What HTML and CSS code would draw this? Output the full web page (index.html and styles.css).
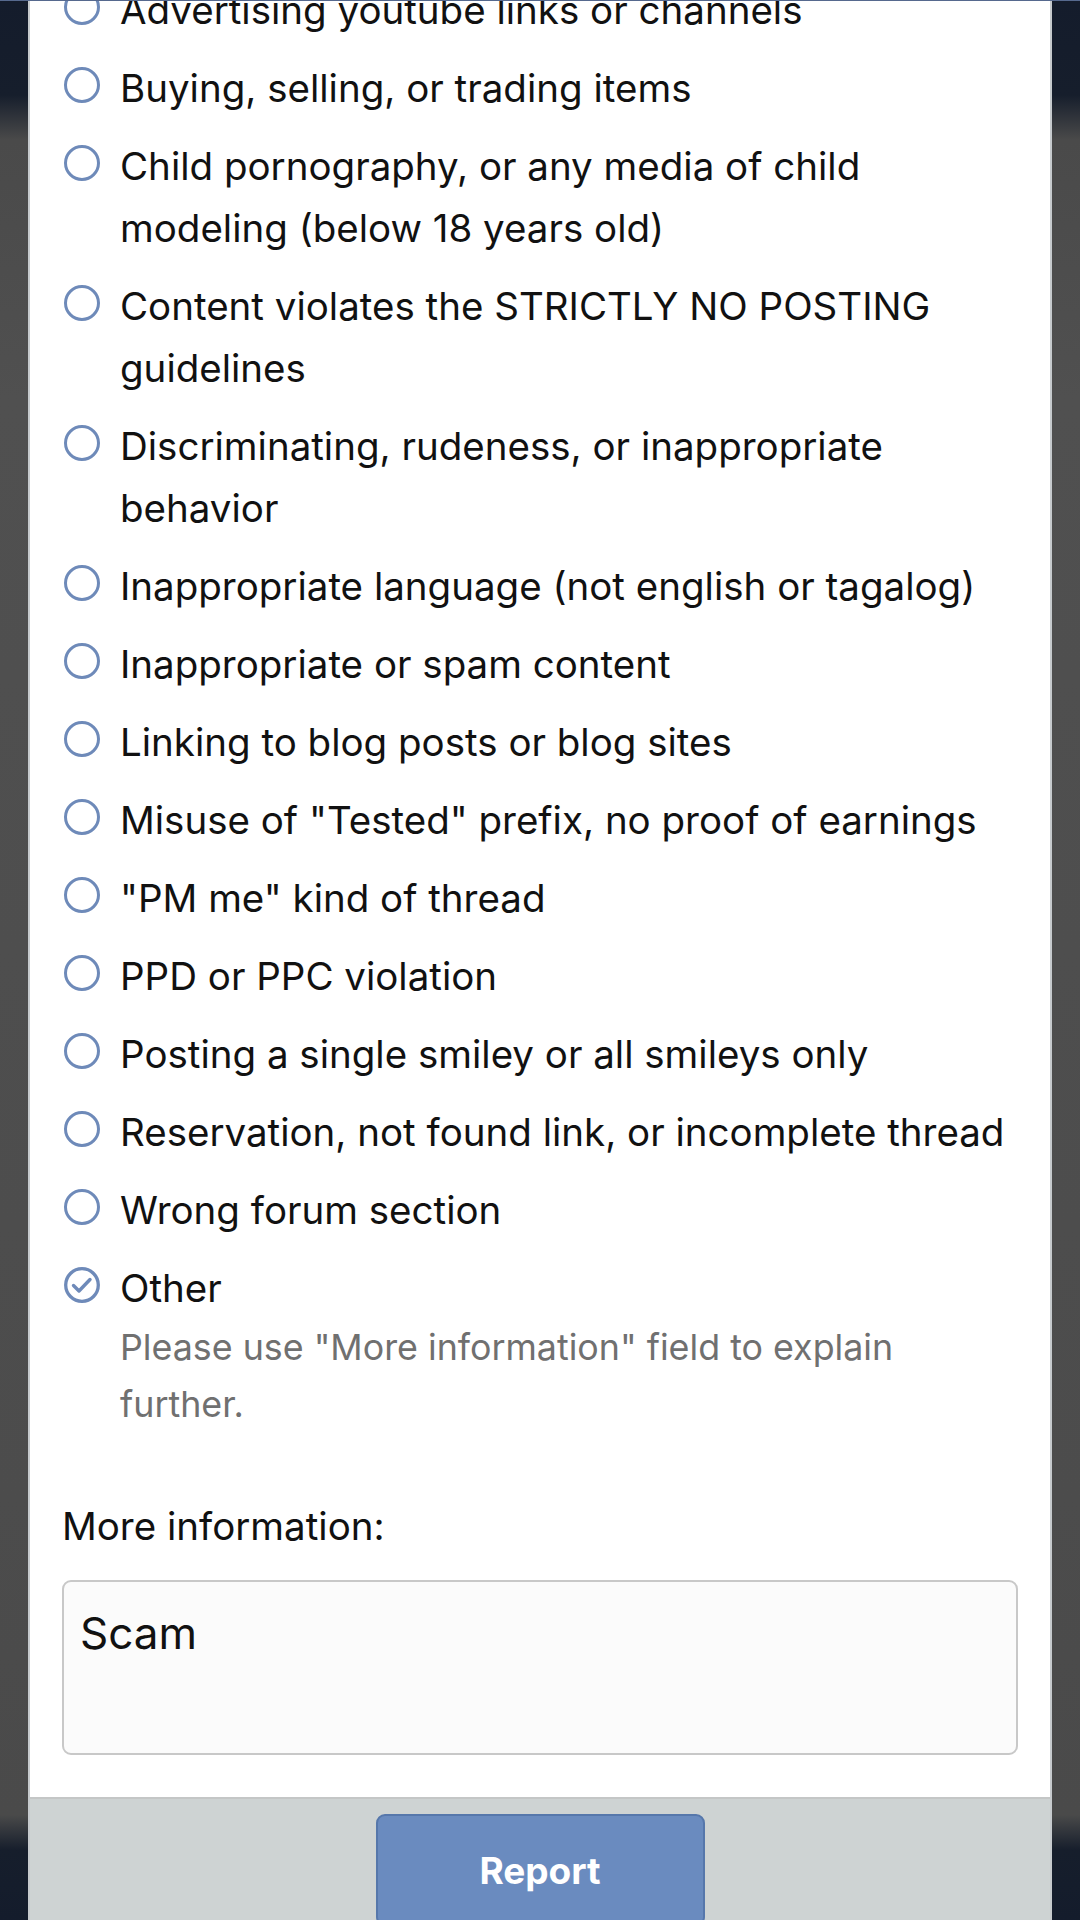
FILE: index.html
```html
<!DOCTYPE html>
<html lang="en">
<head>
<meta charset="utf-8">
<title>Report</title>
<link rel="stylesheet" href="styles.css">
</head>
<body>
<div class="topline"></div>
<div class="modal">
  <div class="body">
    <ul class="choices">
      <li class="choice"><span class="radio"></span><span class="label">Advertising youtube links or channels</span></li>
      <li class="choice"><span class="radio"></span><span class="label">Buying, selling, or trading items</span></li>
      <li class="choice"><span class="radio"></span><span class="label">Child pornography, or any media of child modeling (below 18 years old)</span></li>
      <li class="choice"><span class="radio"></span><span class="label">Content violates the STRICTLY NO POSTING guidelines</span></li>
      <li class="choice"><span class="radio"></span><span class="label">Discriminating, rudeness, or inappropriate behavior</span></li>
      <li class="choice"><span class="radio"></span><span class="label">Inappropriate language (not english or tagalog)</span></li>
      <li class="choice"><span class="radio"></span><span class="label">Inappropriate or spam content</span></li>
      <li class="choice"><span class="radio"></span><span class="label">Linking to blog posts or blog sites</span></li>
      <li class="choice"><span class="radio"></span><span class="label">Misuse of "Tested" prefix, no proof of earnings</span></li>
      <li class="choice"><span class="radio"></span><span class="label">"PM me" kind of thread</span></li>
      <li class="choice"><span class="radio"></span><span class="label">PPD or PPC violation</span></li>
      <li class="choice"><span class="radio"></span><span class="label">Posting a single smiley or all smileys only</span></li>
      <li class="choice"><span class="radio"></span><span class="label">Reservation, not found link, or incomplete thread</span></li>
      <li class="choice"><span class="radio"></span><span class="label">Wrong forum section</span></li>
      <li class="choice checked">
        <span class="radio">
          <svg viewBox="0 0 36 36" width="36" height="36"><circle cx="18" cy="18" r="16.3" fill="none" stroke="#6e8ab9" stroke-width="3.3"/><path d="M9.5 18.5 L15 24 L26 12.5" fill="none" stroke="#6e8ab9" stroke-width="3.4" stroke-linecap="round" stroke-linejoin="round"/></svg>
        </span>
        <span class="label">Other
          <span class="hint">Please use "More information" field to explain further.</span>
        </span>
      </li>
    </ul>
    <div class="field">
      <div class="field-label">More information:</div>
      <div class="textarea">Scam</div>
    </div>
  </div>
  <div class="footer">
    <button class="btn" type="button">Report</button>
  </div>
</div>
</body>
</html>
```

FILE: styles.css
```css
html, body {
  margin: 0;
  padding: 0;
}
body {
  width: 1080px;
  height: 1920px;
  overflow: hidden;
  font-family: Inter, "Noto Sans", "Liberation Sans", sans-serif;
  color: #111111;
  background: linear-gradient(to bottom,
    #141c2c 0px, #161e2c 95px, #4a4a4a 140px, #505050 400px,
    #4c4c4c 1500px, #4a4a4a 1815px, #161e2c 1850px, #141c2c 1920px);
  position: relative;
}
.topline {
  position: absolute;
  left: 0;
  top: 0;
  width: 1080px;
  height: 1px;
  background: #56698e;
  z-index: 2;
}
.modal {
  margin: 0 28px;
  border-left: 2px solid #c6cacd;
  border-right: 2px solid #c6cacd;
  background: #ffffff;
  height: 1920px;
  display: flex;
  flex-direction: column;
}
.body {
  padding: 0 32px 42px 32px;
}
.choices {
  list-style: none;
  margin: -21px 0 0 0;
  padding: 0;
  display: flex;
  flex-direction: column;
  gap: 16px;
}
.choice {
  display: flex;
  align-items: flex-start;
  font-size: 38.5px;
  line-height: 62px;
}
.radio {
  flex: 0 0 40px;
  width: 40px;
  height: 62px;
  display: flex;
  justify-content: center;
  padding-top: 10px;
  box-sizing: border-box;
}
.radio::before {
  content: "";
  width: 36px;
  height: 36px;
  box-sizing: border-box;
  border: 3.3px solid #6e8ab9;
  border-radius: 50%;
}
.checked .radio::before {
  display: none;
}
.checked .radio svg {
  display: block;
}
.label {
  margin-left: 18px;
  flex: 1;
  padding-right: 10px;
}
.hint {
  display: block;
  font-size: 35.8px;
  line-height: 57px;
  color: #707070;
}
.field {
  margin-top: 62px;
}
.field-label {
  font-size: 38.5px;
  line-height: 62px;
}
.textarea {
  margin-top: 23px;
  height: 175px;
  box-sizing: border-box;
  border: 2px solid #c8c8c8;
  border-radius: 9px;
  background: #fbfbfb;
  padding: 18px 16px;
  font-size: 44px;
  line-height: 66px;
}
.footer {
  flex: 1;
  border-top: 2px solid #c4c6c6;
  background: #ced3d3;
  display: flex;
  justify-content: center;
  align-items: flex-start;
  padding-top: 15px;
}
.btn {
  width: 329px;
  height: 112px;
  background: #6a8bbf;
  border: 2px solid #5677ab;
  border-radius: 9px;
  color: #ffffff;
  font-family: Inter, "Noto Sans", "Liberation Sans", sans-serif;
  font-weight: 700;
  font-size: 37px;
  padding: 0;
}
```
